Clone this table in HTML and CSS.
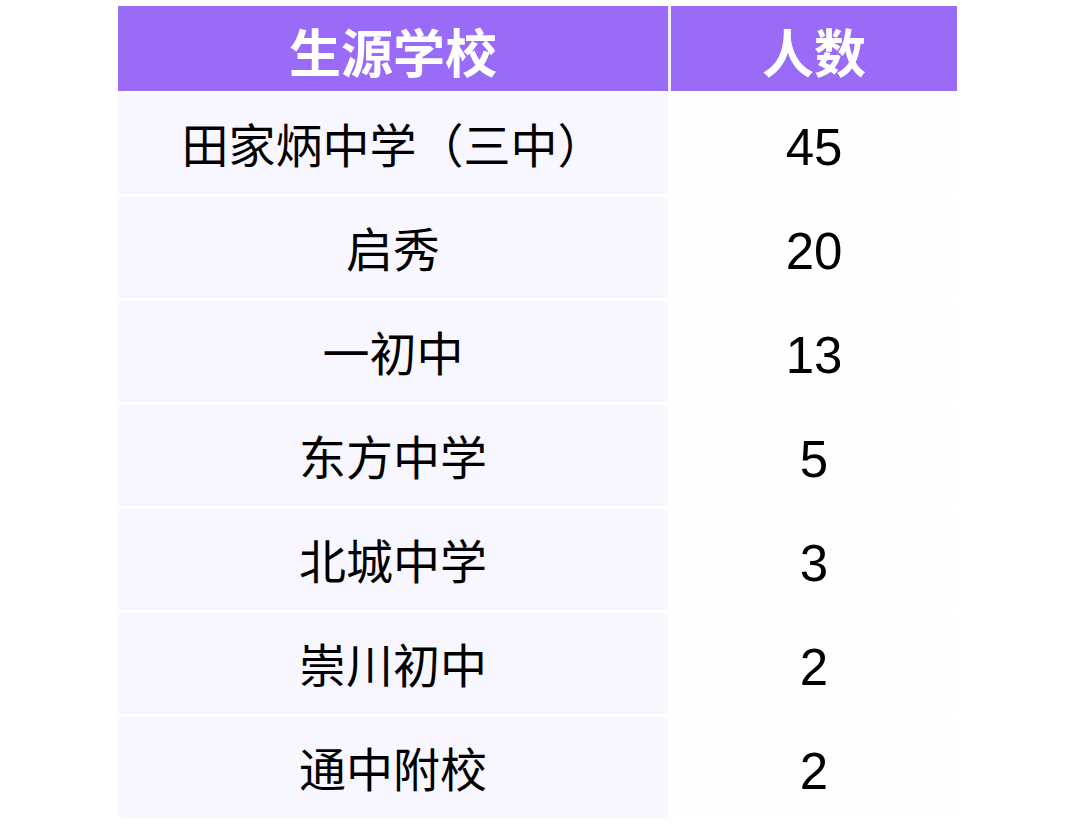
FILE: index.html
```html
<!DOCTYPE html>
<html lang="zh">
<head>
<meta charset="utf-8">
<link rel="stylesheet" href="styles.css">
</head>
<body>
<div class="table">
  <div class="head">
    <div class="hcell">生源学校</div>
    <div class="hdiv"></div>
    <div class="hcell">人数</div>
  </div>
  <div class="rows">
    <div class="row"><div class="name">田家炳中学（三中）</div><div class="num">45</div></div>
    <div class="row"><div class="name">启秀</div><div class="num">20</div></div>
    <div class="row"><div class="name">一初中</div><div class="num">13</div></div>
    <div class="row"><div class="name">东方中学</div><div class="num">5</div></div>
    <div class="row"><div class="name">北城中学</div><div class="num">3</div></div>
    <div class="row"><div class="name">崇川初中</div><div class="num">2</div></div>
    <div class="row"><div class="name">通中附校</div><div class="num">2</div></div>
  </div>
</div>
</body>
</html>
```
FILE: styles.css
```css
html, body {
  margin: 0;
  padding: 0;
  background: #ffffff;
}
body {
  font-family: "Noto Sans CJK SC", "Liberation Sans", sans-serif;
}
.table {
  margin: 6px 0 0 118px;
  width: 839px;
  display: flex;
  flex-direction: column;
  gap: 2px;
}
.head {
  display: grid;
  grid-template-columns: 550px 3px 286px;
  height: 85px;
  background: #9a6bf6;
}
.hdiv {
  background: #f4efff;
}
.hcell {
  display: flex;
  align-items: center;
  justify-content: center;
  color: #ffffff;
  font-weight: 700;
  font-size: 52px;
  padding-top: 4px;
  box-sizing: border-box;
}
.rows {
  display: flex;
  flex-direction: column;
  gap: 3px;
}
.row {
  display: grid;
  grid-template-columns: 550px 286px;
  column-gap: 3px;
  height: 101px;
}
.name, .num {
  display: flex;
  align-items: center;
  justify-content: center;
  box-sizing: border-box;
  color: #000000;
  border-radius: 4px;
}
.name {
  background: #f8f6fe;
  font-size: 47px;
  padding-bottom: 2px;
}
.num {
  background: #fefeff;
  font-family: "Liberation Sans", sans-serif;
  font-size: 51px;
  padding-top: 8px;
}
```
